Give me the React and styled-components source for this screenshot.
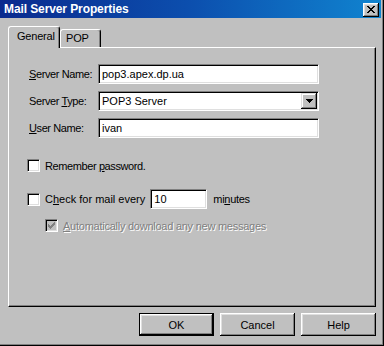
import React from 'react';
import styled, { createGlobalStyle } from 'styled-components';

const Global = createGlobalStyle`
  html, body { margin: 0; padding: 0; background: #c0c0c0; }
  body {
    font-family: "Liberation Sans", Arial, sans-serif;
    font-size: 11px;
    color: #000;
  }
  * { box-sizing: border-box; }
`;

const Window = styled.div`
  width: 384px;
  height: 346px;
  background: #c0c0c0;
  border-right: 1px solid #000;
  border-bottom: 1px solid #000;
  box-shadow: inset -1px -1px 0 #808080;
  padding: 0 2px 2px 0;
  display: flex;
  flex-direction: column;
`;

const TitleBar = styled.div`
  height: 18px;
  flex: none;
  display: flex;
  align-items: center;
  justify-content: space-between;
  padding: 0 2px 0 4px;
  background: linear-gradient(to right, #0a2a8e 0%, #0c4fae 50%, #1084d0 100%);
  color: #fff;
  font-weight: bold;
  font-size: 12px;
`;

const TitleText = styled.span`
  white-space: nowrap;
  letter-spacing: -0.1px;
`;

const CloseButton = styled.div`
  width: 16px;
  height: 14px;
  margin-top: 1px;
  background: #c0c0c0;
  box-shadow: inset -1px -1px #000, inset 1px 1px #fff, inset -2px -2px #808080, inset 2px 2px #dfdfdf;
  display: flex;
  align-items: center;
  justify-content: center;
`;

const Body = styled.div`
  flex: 1;
  display: flex;
  flex-direction: column;
  padding: 8px 5px 8px 8px;
`;

const TabStrip = styled.div`
  height: 21px;
  flex: none;
  display: flex;
  align-items: flex-end;
  position: relative;
  z-index: 1;
`;

const Tab = styled.div`
  height: ${p => (p.$active ? 22 : 18)}px;
  margin-bottom: ${p => (p.$active ? -1 : 0)}px;
  width: ${p => p.$w}px;
  padding-left: ${p => p.$pl}px;
  padding-top: ${p => (p.$active ? 3 : 2)}px;
  background: #c0c0c0;
  border-top: 1px solid #fff;
  border-left: 1px solid #fff;
  border-right: 1px solid #000;
  border-radius: 3px 3px 0 0;
  box-shadow: inset -1px 0 0 #808080;
  white-space: nowrap;
  font-size: 11px;
  letter-spacing: -0.2px;
`;

const Panel = styled.div`
  height: 260px;
  flex: none;
  background: #c0c0c0;
  border-top: 1px solid #fff;
  border-left: 1px solid #fff;
  border-right: 1px solid #000;
  border-bottom: 1px solid #000;
  box-shadow: inset -1px -1px 0 #808080;
  padding: 16px 0 0 18px;
  display: flex;
  flex-direction: column;
`;

const FieldGrid = styled.div`
  display: grid;
  grid-template-columns: 71px 221px;
  row-gap: 7px;
  align-items: center;
`;

const Label = styled.span`
  padding-left: 2px;
  white-space: nowrap;
  font-size: 11px;
  letter-spacing: -0.4px;
`;

const Sunken = styled.div`
  height: 20px;
  width: ${p => p.$w || 221}px;
  flex: none;
  background: #fff;
  border-top: 1px solid #808080;
  border-left: 1px solid #808080;
  border-right: 1px solid #fff;
  border-bottom: 1px solid #fff;
  box-shadow: inset 1px 1px 0 #000, inset -1px -1px 0 #dfdfdf;
  display: flex;
  align-items: center;
  padding-left: 3px;
  font-size: 11px;
  letter-spacing: 0;
  white-space: nowrap;
  position: relative;
`;

const DropButton = styled.div`
  position: absolute;
  right: 1px;
  top: 1px;
  bottom: 1px;
  width: 16px;
  background: #c0c0c0;
  box-shadow: inset -1px -1px #000, inset 1px 1px #dfdfdf, inset -2px -2px #808080, inset 2px 2px #fff;
  display: flex;
  align-items: center;
  justify-content: center;
`;

const CheckRow = styled.div`
  display: flex;
  align-items: center;
  margin-top: ${p => p.$mt}px;
  margin-left: ${p => p.$ml || 0}px;
  color: ${p => (p.$disabled ? '#808080' : '#000')};
  text-shadow: ${p => (p.$disabled ? '1px 1px 0 #fff' : 'none')};
  font-size: 11px;
  white-space: nowrap;
`;

const CheckText = styled.span`
  letter-spacing: ${p => p.$ls || 0}px;
  margin-left: ${p => p.$ml || 0}px;
  margin-right: ${p => p.$mr || 0}px;
`;

const Box = styled.div`
  width: 13px;
  height: 13px;
  flex: none;
  margin-right: 5px;
  background: ${p => (p.$disabled ? '#c0c0c0' : '#fff')};
  border-top: 1px solid #808080;
  border-left: 1px solid #808080;
  border-right: 1px solid #fff;
  border-bottom: 1px solid #fff;
  box-shadow: inset 1px 1px 0 #000, inset -1px -1px 0 #dfdfdf;
  display: flex;
  align-items: center;
  justify-content: center;
`;

const ButtonRow = styled.div`
  display: flex;
  justify-content: flex-end;
  gap: 6px;
  margin-top: 6px;
`;

const Button = styled.div`
  width: 75px;
  height: 23px;
  background: #c0c0c0;
  border: ${p => (p.$default ? '1px solid #000' : 'none')};
  box-shadow: inset -1px -1px #000, inset 1px 1px #fff, inset -2px -2px #808080, inset 2px 2px #dfdfdf;
  display: flex;
  align-items: center;
  justify-content: center;
  font-size: 11px;
`;

const CloseGlyph = () => (
  <svg width="8" height="7" viewBox="0 0 8 7" shapeRendering="crispEdges">
    <path
      d="M0 0h2v1H0zM6 0h2v1H6zM1 1h2v1H1zM5 1h2v1H5zM2 2h4v1H2zM3 3h2v1H3zM2 4h4v1H2zM1 5h2v1H1zM5 5h2v1H5zM0 6h2v1H0zM6 6h2v1H6z"
      fill="#000"
    />
  </svg>
);

const ArrowGlyph = () => (
  <svg width="7" height="4" viewBox="0 0 7 4" shapeRendering="crispEdges">
    <path d="M0 0h7v1H0zM1 1h5v1H1zM2 2h3v1H2zM3 3h1v1H3z" fill="#000" />
  </svg>
);

const CheckGlyph = ({ color }) => (
  <svg width="7" height="7" viewBox="0 0 7 7" shapeRendering="crispEdges">
    <path
      d="M6 0h1v1H6zM5 1h2v1H5zM0 2h1v1H0zM4 2h3v1H4zM0 3h2v1H0zM3 3h3v1H3zM0 4h5v1H0zM1 5h3v1H1zM2 6h1v1H2z"
      fill={color}
    />
  </svg>
);

export default function App() {
  return (
    <>
      <Global />
      <Window>
        <TitleBar>
          <TitleText>Mail Server Properties</TitleText>
          <CloseButton>
            <CloseGlyph />
          </CloseButton>
        </TitleBar>
        <Body>
          <TabStrip>
            <Tab $active $w={52} $pl={8}>General</Tab>
            <Tab $w={41} $pl={5}>POP</Tab>
          </TabStrip>
          <Panel>
            <FieldGrid>
              <Label><u>S</u>erver Name:</Label>
              <Sunken>pop3.apex.dp.ua</Sunken>
              <Label>Server <u>T</u>ype:</Label>
              <Sunken>
                POP3 Server
                <DropButton>
                  <ArrowGlyph />
                </DropButton>
              </Sunken>
              <Label><u>U</u>ser Name:</Label>
              <Sunken>ivan</Sunken>
            </FieldGrid>
            <CheckRow $mt={21}>
              <Box />
              <CheckText $ls={-0.4}>Remember <u>p</u>assword.</CheckText>
            </CheckRow>
            <CheckRow $mt={17}>
              <Box />
              <CheckText $mr={5}>C<u>h</u>eck for mail every</CheckText>
              <Sunken $w={57}>10</Sunken>
              <CheckText $ls={-0.3} $ml={6}>mi<u>n</u>utes</CheckText>
            </CheckRow>
            <CheckRow $mt={10} $ml={18} $disabled>
              <Box $disabled>
                <CheckGlyph color="#808080" />
              </Box>
              <CheckText $ls={-0.25}><u>A</u>utomatically download any new messages</CheckText>
            </CheckRow>
          </Panel>
          <ButtonRow>
            <Button $default>OK</Button>
            <Button>Cancel</Button>
            <Button>Help</Button>
          </ButtonRow>
        </Body>
      </Window>
    </>
  );
}
